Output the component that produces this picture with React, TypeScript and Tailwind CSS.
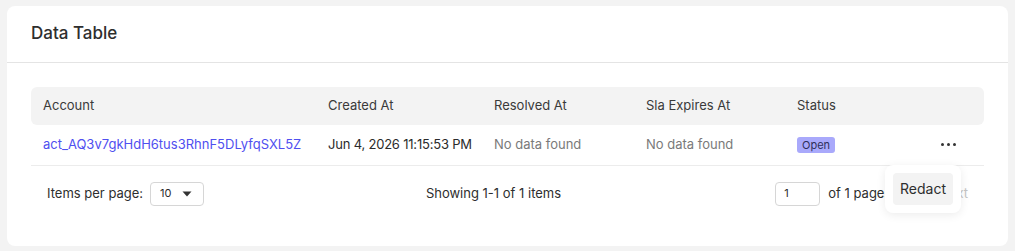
const columns = ["Account", "Created At", "Resolved At", "Sla Expires At", "Status", ""];

function App() {
  return (
    <div className="min-h-[251px] w-full bg-[#f3f3f3] px-[7px] pt-[6px] font-['Inter',sans-serif] text-[#2b2b2b]">
      <div className="rounded-lg bg-white">
        <div className="border-b border-[#e4e4e4] px-6 pt-[15px] pb-[17px]">
          <h2 className="text-[17px] font-medium leading-[24px] text-[#2e2e2e]">Data Table</h2>
        </div>

        <div className="px-6 pt-6 pb-[40px]">
          <table className="w-full table-fixed border-collapse text-left text-[13px]">
            <thead>
              <tr className="bg-[#f3f3f3]">
                <th className="h-[38px] w-[297px] rounded-l-md pl-3 font-normal text-[#3a3a3a]">{columns[0]}</th>
                <th className="w-[166px] font-normal text-[#3a3a3a]">{columns[1]}</th>
                <th className="w-[152px] font-normal text-[#3a3a3a]">{columns[2]}</th>
                <th className="w-[151px] font-normal text-[#3a3a3a]">{columns[3]}</th>
                <th className="w-[120px] font-normal text-[#3a3a3a]">{columns[4]}</th>
                <th className="rounded-r-md font-normal"></th>
              </tr>
            </thead>
            <tbody>
              <tr className="border-b border-[#ececec]">
                <td className="h-[40px] pl-3 text-[#4f4ff0]">act_AQ3v7gkHdH6tus3RhnF5DLyfqSXL5Z</td>
                <td className="tracking-[-0.2px] text-[#2b2b2b]">Jun 4, 2026 11:15:53 PM</td>
                <td className="text-[#7a7a7a]">No data found</td>
                <td className="text-[#7a7a7a]">No data found</td>
                <td>
                  <span className="rounded-[3px] bg-[#a9a9fb] px-[5px] py-[1px] text-[11px] text-[#2f2f5a]">Open</span>
                </td>
                <td className="relative pl-[24px]">
                  <span className="flex gap-[3px]">
                    <span className="h-[3px] w-[3px] rounded-full bg-[#333]" />
                    <span className="h-[3px] w-[3px] rounded-full bg-[#333]" />
                    <span className="h-[3px] w-[3px] rounded-full bg-[#333]" />
                  </span>
                  <div className="absolute top-[40px] left-[-32px] z-10 rounded-lg bg-white p-2 shadow-[0_2px_10px_rgba(0,0,0,0.08)]">
                    <button className="rounded bg-[#f3f3f3] px-[7px] py-[7px] text-[14px] leading-[18px] text-[#2e2e2e]">Redact</button>
                  </div>
                </td>
              </tr>
            </tbody>
          </table>

          <div className="grid grid-cols-[1fr_auto_1fr] items-center pt-4 text-[13px]">
            <div className="flex items-center gap-[7px] pl-4">
              <span className="text-[#2e2e2e]">Items per page:</span>
              <div className="flex h-[24px] w-[54px] items-center justify-between rounded border border-[#d6d6d6] px-[9px] text-[11px]">
                <span>10</span>
                <svg width="10" height="6" viewBox="0 0 10 6" className="mr-[2px]">
                  <path d="M0.5 0.5h9L5 5.5z" fill="#333" />
                </svg>
              </div>
            </div>
            <div className="mr-[28px] text-[#2e2e2e]">Showing 1-1 of 1 items</div>
            <div className="flex items-center justify-end pr-[16px]">
              <div className="flex h-[24px] w-[45px] items-center rounded border border-[#d6d6d6] px-2 text-[11px]">1</div>
              <span className="ml-2 text-[#2e2e2e]">of 1 pages</span>
              <span className="ml-[48px] text-[#c4c4c4]">Next</span>
            </div>
          </div>
        </div>
      </div>
    </div>
  );
}

export default App;
